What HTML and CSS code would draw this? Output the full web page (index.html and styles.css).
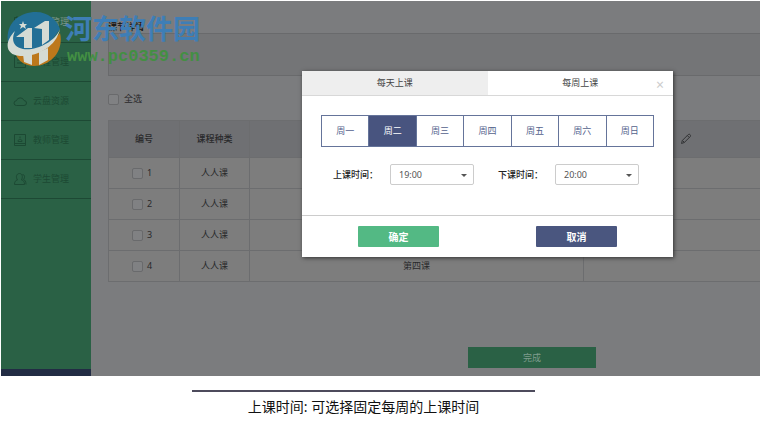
FILE: index.html
```html
<!DOCTYPE html>
<html lang="zh-CN">
<head>
<meta charset="utf-8">
<title>课节详情</title>
<link rel="stylesheet" href="styles.css">
</head>
<body>
<div class="stage">
  <nav class="sidebar">
    <a class="nav-item" href="#"><svg class="nav-icon" viewBox="0 0 14 14"><path d="M1.500 2.500h11v10h-11zM4 1v3M10 1v3M1.500 5.500h11"/></svg>课节管理</a>
    <a class="nav-item" href="#"><svg class="nav-icon" viewBox="0 0 14 14"><path d="M1.500 1.500h11v11h-11zM4 5h6M4 8h6"/></svg>课程管理</a>
    <a class="nav-item" href="#"><svg class="nav-icon" viewBox="0 0 14 14"><path d="M3.500 11.500h7.500a2.300 2.300 0 0 0 0-5A4 4 0 0 0 3.400 6.700a2.400 2.400 0 0 0 .1 4.800z"/></svg>云盘资源</a>
    <a class="nav-item" href="#"><svg class="nav-icon" viewBox="0 0 14 14"><path d="M1.500 1.500h11v11h-11zM1.500 10.500h11M7 3.500v1.500M5 8.500c0-3 4-3 4 0z"/></svg>教师管理</a>
    <a class="nav-item" href="#"><svg class="nav-icon" viewBox="0 0 14 14"><path d="M1.500 12.500c0-3 1-4 3-4.500C2.500 5 3.500 1.500 6.500 1.500S10 5 8.500 8c2 .5 3 1.500 3 4.500zM9.500 2.500c2.500 0 2.500 3.500 1 5 1.500.5 2.500 2 2.500 5"/></svg>学生管理</a>
    <div class="sidebar-foot"></div>
  </nav>
  <main class="content">
    <h1 class="title">课节详情</h1>
    <div class="summary"></div>
    <label class="select-all"><input class="check" type="checkbox">全选</label>
    <table class="lessons">
      <colgroup><col class="col-no"><col class="col-kind"><col class="col-name"><col></colgroup>
      <thead>
        <tr><th>编号</th><th>课程种类</th><th></th><th class="edit-cell"><svg class="pencil" viewBox="0 0 12 12"><path d="M1.500 10.500l.8-3 6-6q1-.7 1.800.2t.2 1.800l-6 6zM7.300 2.500l2 2M2.500 7.500l2 2"/></svg></th></tr>
      </thead>
      <tbody>
        <tr><td><label class="row-pick"><input class="check" type="checkbox">1</label></td><td>人人课</td><td></td><td></td></tr>
        <tr><td><label class="row-pick"><input class="check" type="checkbox">2</label></td><td>人人课</td><td></td><td></td></tr>
        <tr><td><label class="row-pick"><input class="check" type="checkbox">3</label></td><td>人人课</td><td></td><td></td></tr>
        <tr><td><label class="row-pick"><input class="check" type="checkbox">4</label></td><td>人人课</td><td>第四课</td><td></td></tr>
      </tbody>
    </table>
    <button class="finish" type="button">完成</button>
  </main>

  <div class="overlay">
    <section class="modal" role="dialog">
      <div class="tabs">
        <button class="tab" type="button">每天上课</button>
        <button class="tab tab-active" type="button">每周上课</button>
        <button class="close" type="button">×</button>
      </div>
      <div class="modal-body">
        <div class="days">
          <button class="day" type="button">周一</button>
          <button class="day day-active" type="button">周二</button>
          <button class="day" type="button">周三</button>
          <button class="day" type="button">周四</button>
          <button class="day" type="button">周五</button>
          <button class="day" type="button">周六</button>
          <button class="day" type="button">周日</button>
        </div>
        <div class="times">
          <div class="time">
            <label class="time-label" for="start">上课时间：</label>
            <div class="picker"><select id="start"><option>19:00</option></select></div>
          </div>
          <div class="time">
            <label class="time-label" for="end">下课时间：</label>
            <div class="picker"><select id="end"><option>20:00</option></select></div>
          </div>
        </div>
      </div>
      <div class="actions">
        <button class="action confirm" type="button">确定</button>
        <button class="action cancel" type="button">取消</button>
      </div>
    </section>
  </div>
</div>

<div class="caption">
  <p class="caption-text">上课时间: 可选择固定每周的上课时间</p>
</div>

<div class="watermark">
  <svg class="mark" viewBox="0 0 56 56">
    <path fill="#226f96" d="M2 31C-1 13 13 1 30 1c12 0 21 8 24 17L40 38 12 42z"/>
    <path fill="#bd781b" d="M9 42c15 2 33-5 45-20 4 17-8 33-26 33C19 55 12 50 9 42z"/>
    <path fill="#d5dbd4" d="M9 20C-2 31-1 44 14 45c17 1 36-9 40-27-5 13-24 22-37 20C7 36 5 29 9 20z"/>
    <path fill="#d5dbd4" d="M10 26l12-9h4v20h-8V26zM28 17l11-7h4v19l-7 5V18zM17 43l9-1v12l-8-3zM33 41l9-4v12l-9 5z"/>
    <path fill="#d5dbd4" d="M17 10l1 3h3l-2 2 1 3-3-2-3 2 1-3-2-2h3z"/>
  </svg>
  <div class="mark-text">
    <span class="mark-name">河东软件园</span>
    <span class="mark-url">www.pc0359.cn</span>
  </div>
</div>
</body>
</html>
```
FILE: styles.css
```css
* { box-sizing: border-box; }

body {
  margin: 0;
  background: #fff;
  color: #29292b;
  font: 9px/16px "Noto Sans", "Noto Sans CJK SC", sans-serif;
}

button, select {
  margin: 0;
  padding: 0;
  border: 0;
  font: inherit;
  color: inherit;
  background: none;
}

.stage {
  position: relative;
  display: flex;
  min-height: 375px;
  margin: 1px 0 0 1px;
  background: #7b7c7e;
}

.sidebar {
  display: flex;
  flex-direction: column;
  width: 90px;
  background: #2a6145;
}

.nav-item {
  display: flex;
  align-items: center;
  gap: 6px;
  height: 39px;
  padding-left: 12px;
  border-bottom: 1px solid #1d4934;
  color: #1c4933;
  text-decoration: none;
}

.nav-item:first-child { height: 42px; color: #7d9688; }

.nav-icon {
  width: 14px;
  height: 14px;
  fill: none;
  stroke: #1c4933;
}

.sidebar-foot {
  height: 7px;
  margin-top: auto;
  background: #222c44;
}

.content {
  display: flex;
  flex: 1;
  flex-direction: column;
  min-width: 0;
  padding: 18px 0 8px 17px;
}

.title {
  height: 14px;
  margin: 0;
  color: #111;
  font-size: 9px;
  font-weight: 500;
  line-height: 16px;
}

.summary {
  height: 43px;
  border: 1px solid #696a6c;
  border-right: 0;
  background: #747577;
}

.select-all {
  display: flex;
  align-items: center;
  align-self: flex-start;
  gap: 5px;
  height: 44px;
  padding-top: 2px;
}

.check {
  appearance: none;
  width: 11px;
  height: 11px;
  margin: 0;
  border: 1px solid #696a6c;
  border-radius: 2px;
  background: #808183;
}

.lessons {
  width: 100%;
  table-layout: fixed;
  border-collapse: collapse;
  border-bottom: 1px solid #6c6d6f;
  text-align: center;
}

.col-no { width: 71px; }
.col-kind { width: 70px; }
.col-name { width: 334px; }

.lessons th, .lessons td {
  padding: 0;
  border: 1px solid #6c6d6f;
  border-right: 0;
}

.lessons th {
  height: 37px;
  background: #6f7073;
  font-weight: 500;
}

.lessons td {
  height: 31px;
  background: #7d7d7d;
}

.lessons .edit-cell {
  padding-left: 96px;
  text-align: left;
}

.pencil {
  display: block;
  width: 12px;
  height: 12px;
  fill: none;
  stroke: #323335;
}

.row-pick {
  display: flex;
  align-items: center;
  justify-content: center;
  gap: 4px;
  padding-right: 4px;
}

.finish {
  width: 128px;
  height: 21px;
  margin: auto 164px 0 auto;
  background: #2a6145;
  color: #7f9c8d;
}

.overlay {
  position: absolute;
  inset: 0;
  display: flex;
  align-items: flex-start;
  justify-content: center;
  padding: 70px 0 0 214px;
}

.modal {
  width: 371px;
  background: #fff;
  color: #444;
  box-shadow: 1px 1px 4px #333;
}

.tabs {
  position: relative;
  display: flex;
  height: 25px;
  border-bottom: 1px solid #d8d8d8;
}

.tab { flex: 1; background: #eee; }
.tab-active { background: #fff; }

.close {
  position: absolute;
  top: 6px;
  right: 9px;
  color: #ccc;
  font-size: 14px;
  line-height: 16px;
}

.modal-body { padding: 19px 19px 30px; }

.days {
  display: flex;
  border: 1px solid #65749a;
}

.day {
  flex: 1;
  height: 30px;
  color: #53618c;
}

.day + .day { border-left: 1px solid #65749a; }
.days .day-active { background: #48547f; color: #fff; }

.times {
  display: flex;
  gap: 24px;
  margin-top: 17px;
  padding-left: 12px;
}

.time { display: flex; align-items: center; }

.time-label {
  width: 57px;
  color: #222;
  font-weight: 500;
  white-space: nowrap;
}

.picker { position: relative; }

.picker select {
  appearance: none;
  display: block;
  width: 84px;
  height: 21px;
  padding-left: 8px;
  border: 1px solid #ccc;
  border-radius: 2px;
  background: #fff;
  color: #555;
}

.picker::after {
  content: "";
  position: absolute;
  top: 10px;
  right: 7px;
  border: 3px solid transparent;
  border-top-color: #555;
  border-bottom: 0;
  pointer-events: none;
}

.actions {
  display: flex;
  justify-content: space-between;
  padding: 10px 56px;
  border-top: 1px solid #ccc;
}

.action {
  width: 81px;
  height: 21px;
  border-radius: 1px;
  color: #fff;
  font-size: 10px;
  font-weight: 700;
}

.confirm { background: #53b984; }
.cancel { background: #4a567f; }

.caption {
  width: 343px;
  margin: 14px 0 0 192px;
  border-top: 2px solid #4d4b5c;
}

.caption-text {
  margin: 0;
  padding-top: 5px;
  color: #111;
  font-size: 14px;
  line-height: 20px;
  text-align: center;
}

.watermark {
  position: absolute;
  top: 11px;
  left: 6px;
  display: flex;
  gap: 3px;
  pointer-events: none;
}

.mark { width: 56px; height: 56px; }

.mark-text { display: flex; flex-direction: column; }

.mark-name {
  color: #3e7eb6;
  font-size: 27px;
  font-weight: 700;
  line-height: 36px;
}

.mark-url {
  padding-left: 2px;
  color: #438f43;
  font: bold 17px/20px "Liberation Mono", monospace;
}
```
